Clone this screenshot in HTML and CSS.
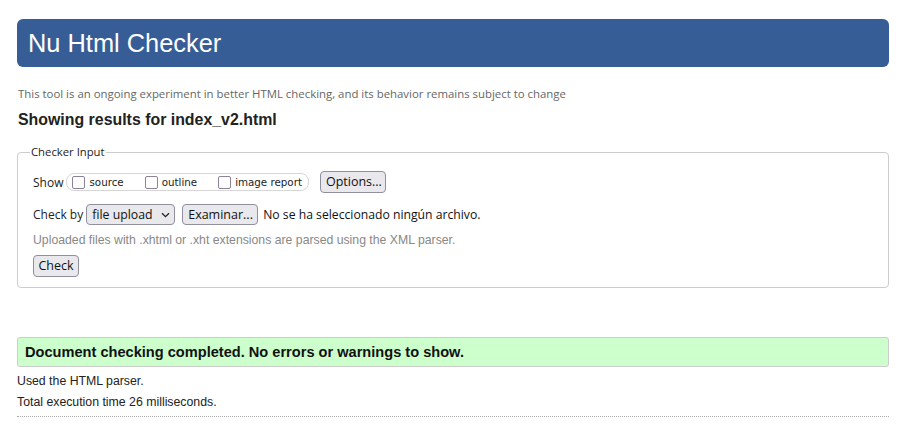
FILE: index.html
```html
<!DOCTYPE html>
<html lang="en">
<head>
<meta charset="utf-8">
<title>Nu Html Checker</title>
<link rel="stylesheet" href="styles.css">
</head>
<body>
<h1 class="banner">Nu Html Checker</h1>
<p class="intro">This tool is an ongoing experiment in better HTML checking, and its behavior remains subject to change</p>
<h2 class="results-title">Showing results for index_v2.html</h2>
<fieldset class="input-box">
  <legend class="legend">Checker Input</legend>
  <div class="row row-show">
    <span class="label">Show</span>
    <span class="check-group">
      <label class="opt"><input type="checkbox" class="cb"><span>source</span></label>
      <label class="opt"><input type="checkbox" class="cb"><span>outline</span></label>
      <label class="opt"><input type="checkbox" class="cb"><span>image report</span></label>
    </span>
    <button class="btn btn-options" type="button">Options...</button>
  </div>
  <div class="row row-checkby">
    <span class="label">Check by</span>
    <span class="select">file upload
      <svg class="chev" width="9" height="6" viewBox="0 0 9 6"><path d="M1 1.2 L4.5 4.6 L8 1.2" fill="none" stroke="#222" stroke-width="1.3"/></svg>
    </span>
    <button class="btn btn-browse" type="button">Examinar...</button>
    <span class="nofile">No se ha seleccionado ningún archivo.</span>
  </div>
  <p class="hint">Uploaded files with .xhtml or .xht extensions are parsed using the XML parser.</p>
  <div class="row row-submit">
    <button class="btn btn-check" type="button">Check</button>
  </div>
</fieldset>
<p class="success">Document checking completed. No errors or warnings to show.</p>
<p class="detail">Used the HTML parser.</p>
<p class="detail">Total execution time 26 milliseconds.</p>
<hr class="rule">
</body>
</html>
```
FILE: styles.css
```css
html, body {
  margin: 0;
  padding: 0;
  background: #fff;
}
body {
  padding: 19px 22px 0 17px;
  font-family: "Liberation Sans", Arial, sans-serif;
  color: #222;
}
.banner {
  margin: 0;
  height: 48px;
  box-sizing: border-box;
  padding-left: 11px;
  background: #365d95;
  border-radius: 6px;
  color: #fff;
  font-weight: normal;
  font-size: 25.4px;
  line-height: 48px;
}
.intro {
  margin: 20px 0 0 1px;
  font-family: "Open Sans", "Noto Sans", sans-serif;
  font-size: 11.4px;
  line-height: 14px;
  color: #666;
}
.results-title {
  margin: 10px 0 0 1px;
  font-size: 15.9px;
  line-height: 18px;
  font-weight: bold;
  color: #222;
}
.input-box {
  margin: 16px 0 0 0;
  padding: 10px 15px 10px 15px;
  border: 1px solid #ccc;
  border-radius: 4px;
  min-width: 0;
}
.legend {
  padding: 0 1px;
  margin-left: -3px;
  font-family: "Open Sans", "Noto Sans", sans-serif;
  font-size: 11.3px;
  line-height: 14px;
  color: #222;
}
.row {
  display: flex;
  align-items: center;
}
.label {
  font-family: "Open Sans", "Noto Sans", sans-serif;
  font-size: 12px;
  color: #222;
}
.row-show {
  height: 22px;
  margin-top: 2px;
}
.check-group {
  display: inline-flex;
  align-items: center;
  height: 18px;
  box-sizing: border-box;
  margin-left: 3px;
  padding: 0 6px 0 5px;
  border: 1px solid #d6d6d6;
  border-radius: 8px;
}
.opt {
  display: inline-flex;
  align-items: center;
  font-family: "DejaVu Sans", Verdana, sans-serif;
  font-size: 10.3px;
  color: #222;
  margin-right: 21px;
}
.opt:last-child {
  margin-right: 0;
}
.cb {
  appearance: none;
  -webkit-appearance: none;
  width: 13px;
  height: 13px;
  margin: 0 4px 0 0;
  box-sizing: border-box;
  border: 1px solid #8a8397;
  border-radius: 2px;
  background: #fff;
}
.btn {
  font-family: "Open Sans", "Noto Sans", sans-serif;
  font-size: 12.5px;
  color: #111;
  background: #e9e9ed;
  border: 1px solid #8f8f9d;
  border-radius: 4px;
  padding: 0 5px;
  height: 22px;
  line-height: 20px;
  box-sizing: border-box;
}
.btn-options {
  margin-left: 11px;
  width: 66px;
}
.row-checkby {
  height: 21px;
  margin-top: 11px;
}
.select {
  display: inline-flex;
  align-items: center;
  gap: 8px;
  height: 21px;
  width: 89px;
  box-sizing: border-box;
  margin-left: 3px;
  padding-left: 5px;
  font-family: "Open Sans", "Noto Sans", sans-serif;
  font-size: 12.3px;
  color: #111;
  background: #e9e9ed;
  border: 1px solid #8f8f9d;
  border-radius: 4px;
}
.btn-browse {
  margin-left: 7px;
  height: 21px;
  width: 76px;
  line-height: 19px;
}
.nofile {
  margin-left: 5px;
  font-family: "Open Sans", "Noto Sans", sans-serif;
  font-size: 12.2px;
  color: #111;
}
.hint {
  margin: 7px 0 0 0;
  font-size: 12.25px;
  line-height: 16px;
  color: #888;
}
.row-submit {
  margin-top: 7px;
}
.btn-check {
  width: 46px;
  padding: 0;
}
.success {
  margin: 49px 0 0 0;
  height: 30px;
  box-sizing: border-box;
  padding-left: 7px;
  background: #ccffcc;
  border: 1px solid #ccc;
  border-radius: 3px;
  font-size: 14.6px;
  font-weight: bold;
  line-height: 28px;
  color: #111;
}
.detail {
  margin: 7px 0 0 0;
  font-size: 12.3px;
  line-height: 15px;
  color: #222;
}
.detail + .detail {
  margin-top: 6px;
}
.rule {
  margin: 6px 0 0 0;
  border: 0;
  border-top: 1px dotted #aaa;
  height: 0;
}
```
